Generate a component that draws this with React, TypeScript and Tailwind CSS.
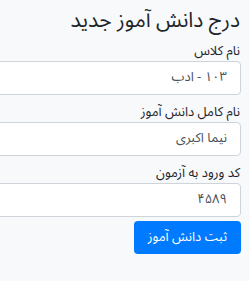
export default function App() {
  return (
    <div dir="rtl" className="w-[249px] h-[281px] overflow-hidden bg-[#f8f9fa] text-[#212529] font-['Noto_Sans_Arabic',sans-serif]">
      <div className="w-[320px] pr-[8px] pt-[6px]">
        <h4 className="text-[21px] leading-[28px] mb-[7px] pr-[1px]">درج دانش آموز جدید</h4>
        <div className="mb-[7px]">
          <label className="block text-[13px] leading-[20px] pr-[1px]">نام کلاس</label>
          <div className="h-[34px] border border-[#ced4da] rounded-[4px] bg-white text-[13px] text-[#495057] flex items-center px-[13px]">۱۰۳ - ادب</div>
        </div>
        <div className="mb-[7px]">
          <label className="block text-[13px] leading-[20px] pr-[1px]">نام کامل دانش آموز</label>
          <div className="h-[34px] border border-[#ced4da] rounded-[4px] bg-white text-[13px] text-[#495057] flex items-center px-[13px]">نیما اکبری</div>
        </div>
        <div className="mb-[4px]">
          <label className="block text-[13px] leading-[20px] pr-[1px]">کد ورود به آزمون</label>
          <div className="h-[34px] border border-[#ced4da] rounded-[4px] bg-white text-[13px] text-[#495057] flex items-center px-[13px]">۴۵۸۹</div>
        </div>
        <button className="h-[33px] w-[107px] rounded-[4px] bg-[#007bff] text-white text-[13px]">ثبت دانش آموز</button>
      </div>
    </div>
  );
}
